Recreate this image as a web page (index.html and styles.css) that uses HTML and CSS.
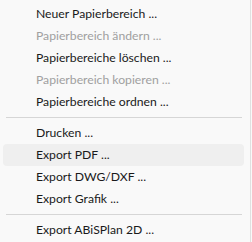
FILE: index.html
```html
<!DOCTYPE html>
<html>
<head>
<meta charset="utf-8">
<link rel="stylesheet" href="styles.css">
</head>
<body>
<div class="menu">
  <div class="item">Neuer Papierbereich ...</div>
  <div class="item disabled">Papierbereich ändern ...</div>
  <div class="item">Papierbereiche löschen ...</div>
  <div class="item disabled">Papierbereich kopieren ...</div>
  <div class="item">Papierbereiche ordnen ...</div>
  <div class="sep"></div>
  <div class="item">Drucken ...</div>
  <div class="item hover">Export PDF ...</div>
  <div class="item">Export DWG/DXF ...</div>
  <div class="item">Export Grafik ...</div>
  <div class="sep"></div>
  <div class="item">Export ABiSPlan 2D ...</div>
</div>
</body>
</html>
```

FILE: styles.css
```css
html, body {
  margin: 0;
  padding: 0;
  background: #f9f9f9;
}
.menu {
  width: 251px;
  height: 242px;
  box-sizing: border-box;
  border-right: 1px solid #e0e0e0;
  padding: 3px 0 0 0;
  font-family: "Lato", sans-serif;
  font-size: 12.2px;
  color: #1a1a1a;
}
.item {
  height: 22px;
  line-height: 22px;
  margin: 0 6px 0 3px;
  padding-left: 33px;
  border-radius: 4px;
  white-space: nowrap;
}
.item.disabled {
  color: #a0a0a0;
}
.item.hover {
  background: #efefef;
}
.sep {
  height: 1px;
  background: #d6d6d6;
  margin: 4px 8px 4px 6px;
}
```
